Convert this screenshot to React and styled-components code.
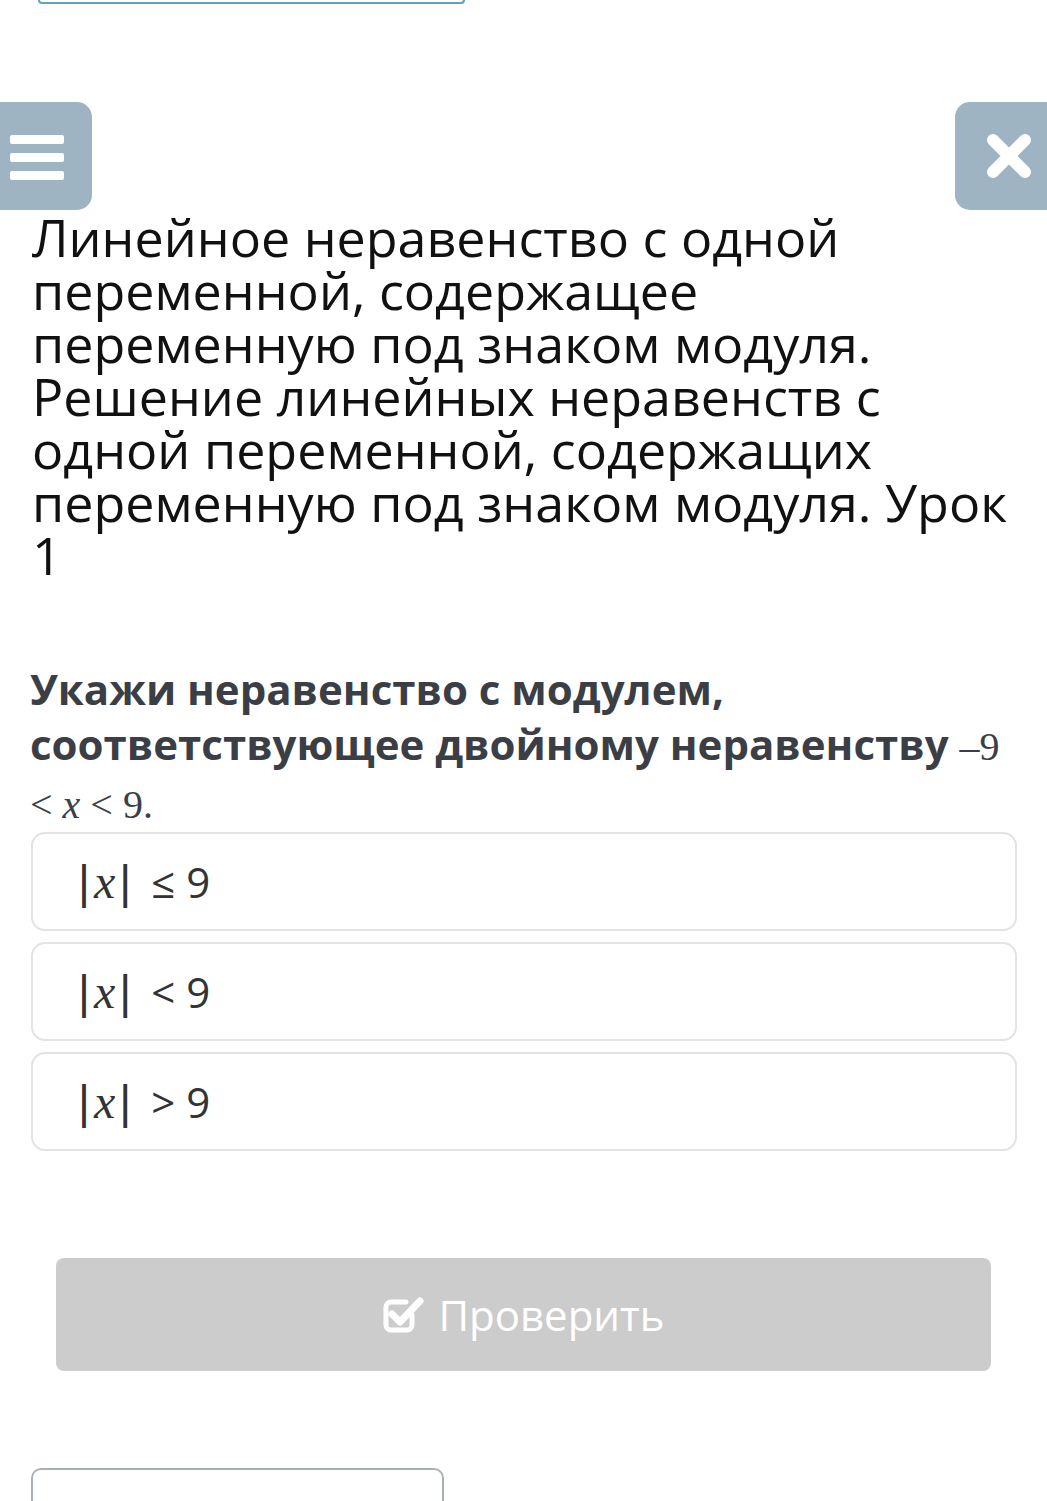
import React from "react";
import styled, { createGlobalStyle } from "styled-components";

const GlobalStyle = createGlobalStyle`
  html, body {
    margin: 0;
    padding: 0;
    background: #ffffff;
  }
  body {
    font-family: "Open Sans", "Noto Sans", sans-serif;
  }
`;

const Page = styled.div`
  width: 1047px;
  min-height: 1501px;
  overflow: hidden;
`;

const PrevCard = styled.div`
  margin-left: 38px;
  width: 423px;
  height: 2px;
  border: 2px solid #5fa3c1;
  border-top: none;
  border-radius: 0 0 10px 10px;
`;

const Header = styled.div`
  display: flex;
  justify-content: space-between;
  margin-top: 98px;
  height: 108px;
`;

const SideButton = styled.button`
  width: 92px;
  height: 108px;
  border: none;
  padding: 0;
  background: #9fb4c2;
  border-radius: ${(p) => (p.$side === "left" ? "0 15px 15px 0" : "15px 0 0 15px")};
  display: flex;
  align-items: center;
  justify-content: ${(p) => (p.$side === "left" ? "flex-start" : "center")};
  padding-left: ${(p) => (p.$side === "left" ? "10px" : "16px")};
  cursor: pointer;
`;

const Burger = styled.div`
  display: flex;
  flex-direction: column;
  gap: 9px;
  margin-top: 2px;
`;

const Bar = styled.span`
  display: block;
  width: 54px;
  height: 9px;
  border-radius: 2px;
  background: #ffffff;
`;

const Title = styled.h1`
  margin: 0;
  padding: 0 32px;
  font-family: "Open Sans", sans-serif;
  font-weight: 400;
  font-size: 52px;
  line-height: 53px;
  color: #111111;
`;

const Question = styled.p`
  margin: 80px 0 0;
  padding: 0 30px;
  font-family: "Open Sans", sans-serif;
  font-weight: 700;
  font-size: 42px;
  line-height: 55px;
  color: #3b3f45;
`;

const MathInline = styled.span`
  font-family: "Liberation Serif", "DejaVu Serif", serif;
  font-weight: 400;
  font-size: 40px;
  white-space: ${(p) => (p.$nowrap ? "nowrap" : "normal")};
`;

const Var = styled.i`
  font-family: "Liberation Serif", "DejaVu Serif", serif;
  font-style: italic;
`;

const Options = styled.div`
  display: flex;
  flex-direction: column;
  gap: 11px;
  margin: 0 30px 0 31px;
`;

const Option = styled.div`
  height: 95px;
  border: 2px solid #e1e3e5;
  border-radius: 14px;
  display: flex;
  align-items: center;
  padding-left: 45px;
  font-family: "Open Sans", sans-serif;
  font-size: 42px;
  color: #333333;
`;

const Abs = styled.span`
  font-family: "Liberation Serif", serif;
  font-size: 48px;
  display: inline-flex;
  align-items: center;
  gap: 4px;
  margin-right: 20px;
`;

const Pipe = styled.span`
  font-family: "Liberation Sans", sans-serif;
  font-size: 46px;
  font-weight: 300;
`;

const CheckButton = styled.button`
  display: flex;
  align-items: center;
  justify-content: center;
  gap: 12px;
  margin: 107px 56px 0;
  width: calc(100% - 112px);
  height: 113px;
  border: none;
  border-radius: 8px;
  background: #cccccc;
  color: #ffffff;
  font-family: "Open Sans", sans-serif;
  font-size: 42px;
  cursor: default;
`;

const NextCard = styled.div`
  margin: 97px 0 0 31px;
  width: 409px;
  height: 60px;
  border: 2px solid #a9b1b5;
  border-bottom: none;
  border-radius: 10px 10px 0 0;
`;

const CheckIcon = () => (
  <svg width="44" height="40" viewBox="0 0 44 40">
    <path
      d="M30 20 V30 a5 5 0 0 1 -5 5 H9 a5 5 0 0 1 -5 -5 V12 a5 5 0 0 1 5 -5 H24"
      fill="none"
      stroke="#ffffff"
      strokeWidth="5"
      strokeLinecap="round"
    />
    <path
      d="M10 19 L18 27 L38 6"
      fill="none"
      stroke="#ffffff"
      strokeWidth="7"
      strokeLinecap="round"
      strokeLinejoin="round"
    />
  </svg>
);

const CloseIcon = () => (
  <svg width="48" height="48" viewBox="0 0 48 48">
    <path
      d="M8 8 L40 40 M40 8 L8 40"
      stroke="#ffffff"
      strokeWidth="12"
      strokeLinecap="round"
    />
  </svg>
);

const options = ["≤ 9", "< 9", "> 9"];

export default function App() {
  return (
    <Page>
      <GlobalStyle />
      <PrevCard />
      <Header>
        <SideButton $side="left" aria-label="Меню">
          <Burger>
            <Bar />
            <Bar />
            <Bar />
          </Burger>
        </SideButton>
        <SideButton $side="right" aria-label="Закрыть">
          <CloseIcon />
        </SideButton>
      </Header>
      <Title>
        Линейное неравенство с одной переменной, содержащее переменную под
        знаком модуля. Решение линейных неравенств с одной переменной,
        содержащих переменную под знаком модуля. Урок 1
      </Title>
      <Question>
        Укажи неравенство с модулем, соответствующее двойному неравенству{" "}
        <MathInline $nowrap>–9</MathInline>{" "}
        <MathInline>
          &lt; <Var>x</Var> &lt; 9.
        </MathInline>
      </Question>
      <Options>
        {options.map((o) => (
          <Option key={o}>
            <Abs>
              <Pipe>|</Pipe>
              <Var>x</Var>
              <Pipe>|</Pipe>
            </Abs>
            {o}
          </Option>
        ))}
      </Options>
      <CheckButton>
        <CheckIcon />
        Проверить
      </CheckButton>
      <NextCard />
    </Page>
  );
}
